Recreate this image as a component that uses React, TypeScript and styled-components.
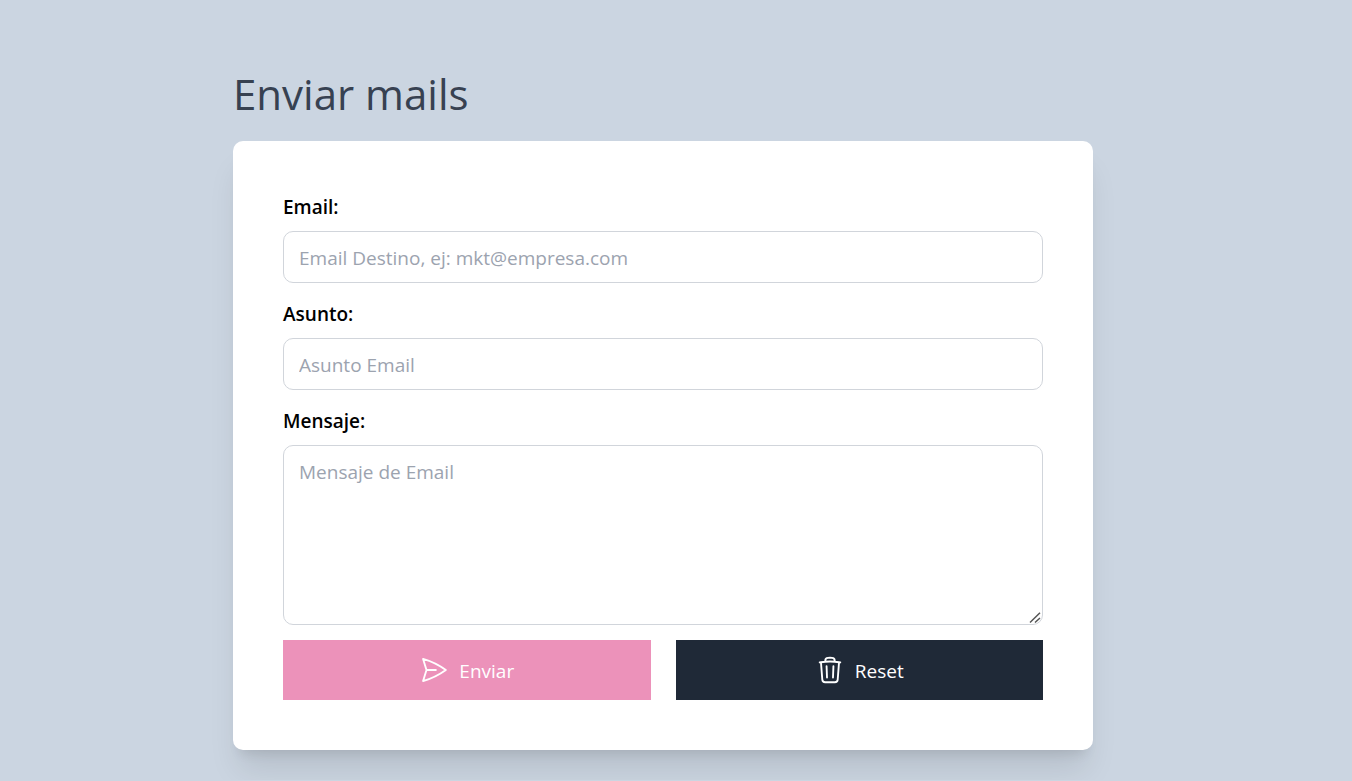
import React from 'react';
import styled, { createGlobalStyle } from 'styled-components';
import { HiOutlinePaperAirplane, HiOutlineTrash } from 'react-icons/hi2';

const GlobalStyle = createGlobalStyle`
  *, *::before, *::after { box-sizing: border-box; }
  body {
    margin: 0;
    background: #cbd5e1;
    color: #000;
    font-family: "Segoe UI", "Open Sans", "Noto Sans", sans-serif;
    font-size: 19px;
    line-height: 30px;
  }
`;

const Page = styled.main`
  box-sizing: content-box;
  max-width: 860px;
  margin: 0 auto;
  padding: 69px 26px 30px 0;
`;

const Title = styled.h1`
  margin: 0 0 22px;
  color: #374151;
  font-size: 42px;
  font-weight: 400;
  line-height: 50px;
`;

const Card = styled.form`
  display: flex;
  flex-direction: column;
  gap: 15px;
  padding: 50px;
  border-radius: 10px;
  background: #fff;
  box-shadow: 0 25px 31px -6px rgba(0, 0, 0, 0.1), 0 10px 12px -7px rgba(0, 0, 0, 0.1);
`;

const Field = styled.div`
  display: flex;
  flex-direction: column;
  gap: 10px;
`;

const Label = styled.label`
  padding-top: 2px;
  font-weight: 600;
  line-height: 28px;
`;

const Input = styled.input`
  width: 100%;
  height: 52px;
  padding: 12px 15px 10px;
  border: 1px solid #d1d5db;
  border-radius: 10px;
  background: #fff;
  color: inherit;
  font: inherit;
  &::placeholder { color: #9ca3af; opacity: 1; }
`;

const TextArea = styled(Input).attrs({ as: 'textarea' })`
  display: block;
  height: 180px;
  padding: 11px 15px;
  resize: vertical;
  &::-webkit-resizer { background: transparent; }
`;

const TextAreaFrame = styled.div`
  position: relative;
`;

const Grip = styled.svg`
  position: absolute;
  right: 2px;
  bottom: 1px;
  pointer-events: none;
`;

const Actions = styled.div`
  display: grid;
  grid-template-columns: 1fr 1fr;
  gap: 25px;
`;

const Button = styled.button<{ $tone: string }>`
  display: flex;
  align-items: center;
  justify-content: center;
  gap: 10px;
  height: 60px;
  padding: 0 15px;
  border: 0;
  background: ${({ $tone }) => $tone};
  color: #fff;
  font: inherit;
  cursor: pointer;
  &:disabled { opacity: 0.5; cursor: default; }
`;

const ButtonText = styled.span`
  padding-top: 2px;
`;

export default function App() {
  return (
    <>
      <GlobalStyle />
      <Page>
        <Title>Enviar mails</Title>
        <Card onSubmit={(event) => event.preventDefault()}>
          <Field>
            <Label htmlFor="email">Email:</Label>
            <Input id="email" type="email" placeholder="Email Destino, ej: mkt@empresa.com" />
          </Field>
          <Field>
            <Label htmlFor="asunto">Asunto:</Label>
            <Input id="asunto" type="text" placeholder="Asunto Email" />
          </Field>
          <Field>
            <Label htmlFor="mensaje">Mensaje:</Label>
            <TextAreaFrame>
              <TextArea id="mensaje" placeholder="Mensaje de Email" />
              <Grip width="12" height="12" viewBox="0 0 12 12" stroke="#555" strokeWidth="1.5" aria-hidden>
                <path d="M1 10.5 11 .8M6 10.5l5-4.5" />
              </Grip>
            </TextAreaFrame>
          </Field>
          <Actions>
            <Button type="submit" $tone="#db2777" disabled>
              <HiOutlinePaperAirplane size={30} aria-hidden />
              <ButtonText>Enviar</ButtonText>
            </Button>
            <Button type="reset" $tone="#1f2937">
              <HiOutlineTrash size={30} aria-hidden />
              <ButtonText>Reset</ButtonText>
            </Button>
          </Actions>
        </Card>
      </Page>
    </>
  );
}
